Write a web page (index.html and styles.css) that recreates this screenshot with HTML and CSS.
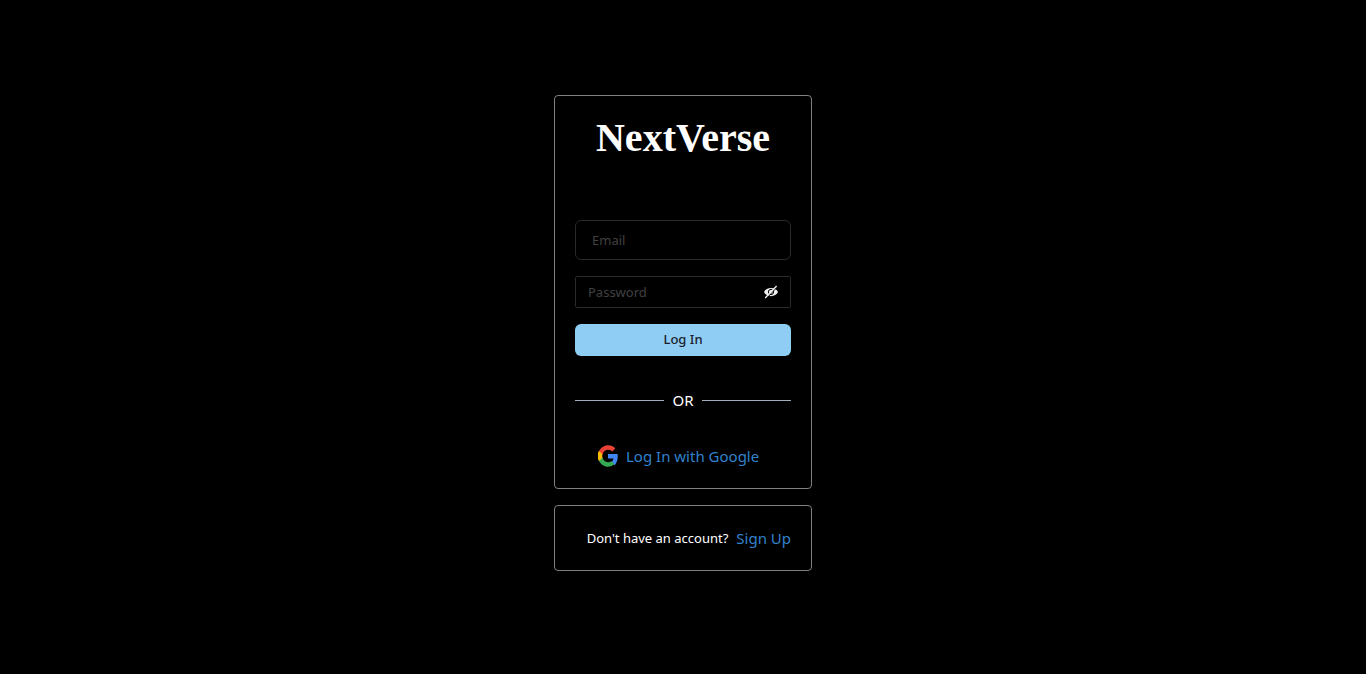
FILE: index.html
```html
<!DOCTYPE html>
<html lang="en">
<head>
<meta charset="utf-8">
<meta name="viewport" content="width=device-width, initial-scale=1">
<title>NextVerse</title>
<link rel="stylesheet" href="styles.css">
</head>
<body>
<main class="auth">
  <section class="card">
    <form class="form">
      <h1 class="logo">NextVerse</h1>
      <input class="input" type="email" placeholder="Email" aria-label="Email">
      <div class="password">
        <input class="password-input" type="password" placeholder="Password" aria-label="Password">
        <button class="toggle" type="button" aria-label="Show password">
          <svg width="16" height="16" viewBox="0 0 16 16" aria-hidden="true">
            <path d="M2 8C4 2.500 14 2.500 16 8 14 13.500 4 13.500 2 8z" fill="#f0f0f0"/>
            <circle cx="9" cy="8" r="2.600" fill="none" stroke="#000" stroke-width="1"/>
            <path d="M4.200 14.800 15.200 3" stroke="#000" stroke-width="1"/>
            <path d="M3.200 14 14.600 2" stroke="#f0f0f0" stroke-width="1.300"/>
          </svg>
        </button>
      </div>
      <button class="submit" type="submit">Log In</button>
    </form>
    <div class="divider">OR</div>
    <button class="google" type="button">
      <svg width="20" height="22" viewBox="3 3 42 42" preserveAspectRatio="none" aria-hidden="true">
        <path fill="#FBBC05" d="M13 29A12 12 0 0 1 13 19L5.300 13.500a20.500 20.500 0 0 0 0 21z"/>
        <path fill="#EA4335" d="M24 12c3.600 0 6.700 1.300 9.200 3.600l6.200-6.200C35.500 5.800 30.200 3.500 24 3.500 15.800 3.500 8.700 8.200 5.300 15l7.200 5.500C14.200 15.600 18.700 12 24 12z"/>
        <path fill="#4285F4" d="M44.500 24.500c0-1.600-.2-3-.4-4.500H24v9h11.600c-.6 2.900-2.200 5.400-4.700 7l7 5.500c4.300-3.900 6.600-9.900 6.600-17z"/>
        <path fill="#34A853" d="M24 44.500c5.500 0 10.300-1.800 13.900-5l-7-5.500c-1.900 1.300-4.200 2-6.900 2-5.400 0-9.800-3.600-11.500-8.500L5.300 33c3.400 6.800 10.400 11.500 18.700 11.500z"/>
      </svg>
      <span>Log In with Google</span>
    </button>
  </section>
  <section class="card signup">
    <span class="question">Don't have an account?</span>
    <a class="link" href="#">Sign Up</a>
  </section>
</main>
</body>
</html>
```
FILE: styles.css
```css
* {
  box-sizing: border-box;
}

body {
  margin: 0;
  min-height: 100vh;
  display: flex;
  justify-content: center;
  align-items: center;
  padding-bottom: 8px;
  background: #000;
  color: #fff;
  font: 15px/24px "Segoe UI", "Noto Sans", "Open Sans", sans-serif;
}

button,
input {
  font-family: inherit;
  margin: 0;
}

.auth {
  display: flex;
  flex-direction: column;
  gap: 16px;
  width: 100%;
  max-width: 258px;
}

.card {
  border: 1px solid #808080;
  border-radius: 4px;
  padding: 20px;
}

.form {
  display: flex;
  flex-direction: column;
  gap: 16px;
}

.logo {
  margin: 0;
  height: 88px;
  text-align: center;
  font: bold 40px/44px "Liberation Serif", serif;
}

.input {
  width: 100%;
  height: 40px;
  padding: 0 16px;
  border: 1px solid #2a2a2a;
  border-radius: 6px;
  background: transparent;
  color: #fff;
  font-size: 13px;
}

.password {
  display: flex;
  align-items: center;
  height: 32px;
  padding: 0 12px;
  border: 1px solid #2a2a2a;
  border-radius: 2px;
}

.password-input {
  flex: 1;
  min-width: 0;
  padding: 0;
  border: 0;
  background: transparent;
  color: #fff;
  font-size: 13px;
}

.input::placeholder,
.password-input::placeholder {
  color: #404040;
}

.toggle {
  display: flex;
  padding: 0;
  border: 0;
  background: none;
}

.submit {
  height: 32px;
  padding: 0 0 2px;
  border: 0;
  border-radius: 6px;
  background: #90cdf4;
  color: #1a202c;
  font-size: 13px;
  font-weight: 500;
}

.divider {
  display: flex;
  align-items: center;
  gap: 8px;
  margin: 32px 0;
}

.divider::before,
.divider::after {
  content: "";
  flex: 1;
  height: 1px;
  background: #a0aec0;
}

.google {
  display: flex;
  align-items: center;
  gap: 8px;
  width: 100%;
  height: 24px;
  padding: 0 23px;
  border: 0;
  background: none;
  color: #3182ce;
  font-size: 15px;
  white-space: nowrap;
}

.signup {
  display: flex;
  justify-content: flex-end;
  align-items: center;
  gap: 8px;
  white-space: nowrap;
}

.question {
  font-size: 13px;
}

.link {
  color: #3182ce;
  text-decoration: none;
}
```
